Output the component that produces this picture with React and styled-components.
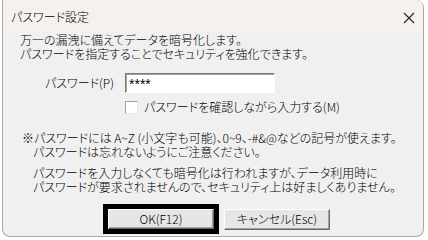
import React, { useState } from "react";
import styled, { createGlobalStyle } from "styled-components";

const GlobalStyle = createGlobalStyle`
  html, body {
    margin: 0;
    padding: 0;
    background: #ffffff;
  }
  body {
    font-family: "Noto Sans CJK JP", "Liberation Sans", sans-serif;
    font-size: 12px;
    font-weight: 300;
    color: #000;
    font-feature-settings: "palt";
  }
`;

const Desktop = styled.div`
  width: 428px;
  height: 240px;
  display: flex;
  padding: 0 4px 3px 2px;
  box-sizing: border-box;
  background: #fff;
`;

const Window = styled.div`
  flex: 1;
  display: flex;
  flex-direction: column;
  background: #f0f0f0;
  border: 1px solid #a8a8a8;
  border-top: none;
  border-radius: 0 8px 8px 8px;
  overflow: hidden;
`;

const TitleBar = styled.div`
  height: 31px;
  display: flex;
  align-items: center;
  justify-content: space-between;
  padding: 0 2px 0 8px;
  background: #f4f1ee;
  flex-shrink: 0;
`;

const Title = styled.span`
  font-size: 12px;
  line-height: 1;
  margin-top: 2px;
`;

const CloseButton = styled.button`
  width: 24px;
  height: 22px;
  display: flex;
  align-items: center;
  justify-content: center;
  border: 0;
  background: transparent;
  padding: 0;
  margin-top: 4px;
`;

const Body = styled.div`
  display: flex;
  flex-direction: column;
  padding: 2px 6px 0 17px;
`;

const Lines = styled.div`
  line-height: 14px;
  margin-top: ${p => p.$top || 0}px;
  padding-left: ${p => p.$indent || 0}px;
  white-space: nowrap;
`;

const Indented = styled.div`
  padding-left: 11px;
`;

const FieldRow = styled.div`
  display: flex;
  align-items: center;
  margin-top: 12px;
  padding-left: 25px;
`;

const FieldLabel = styled.label`
  width: 80px;
  line-height: 14px;
`;

const PasswordInput = styled.input`
  width: 150px;
  height: 20px;
  box-sizing: border-box;
  border: 1px solid;
  border-color: #7a7a7a #ffffff #ffffff #7a7a7a;
  box-shadow: inset 1px 1px 0 #a0a0a0;
  background: #fff;
  padding: 2px 3px 0;
  font-family: "Liberation Sans", sans-serif;
  font-size: 14px;
  color: #000;
  outline: none;
`;

const CheckRow = styled.label`
  display: flex;
  align-items: center;
  gap: 6px;
  margin-top: 7px;
  padding-left: 105px;
  line-height: 14px;
`;

const CheckBox = styled.span`
  width: 13px;
  height: 13px;
  box-sizing: border-box;
  background: #fff;
  border: 1px solid;
  border-color: #a0a0a0 #e8e8e8 #e8e8e8 #a0a0a0;
  flex-shrink: 0;
`;

const ButtonRow = styled.div`
  display: flex;
  align-items: center;
  gap: 5px;
  margin-top: 10px;
  padding-left: 83px;
`;

const Focus = styled.div`
  border: 5px solid #000;
  display: flex;
`;

const Button = styled.button`
  width: 106px;
  height: ${p => (p.$focused ? 20 : 21)}px;
  box-sizing: border-box;
  background: #e6e6e6;
  border: 1px solid;
  border-color: #ffffff #6a6a6a #6a6a6a #ffffff;
  box-shadow: inset -1px -1px 0 #a0a0a0;
  font-family: "Noto Sans CJK JP", "Liberation Sans", sans-serif;
  font-feature-settings: "palt";
  font-weight: 300;
  font-size: 12px;
  color: #000;
  padding: 0;
  line-height: 1;
`;

export default function App() {
  const [password] = useState("****");
  return (
    <>
      <GlobalStyle />
      <Desktop>
        <Window>
          <TitleBar>
            <Title>パスワード設定</Title>
            <CloseButton aria-label="閉じる">
              <svg width="12" height="12" viewBox="0 0 12 12">
                <path d="M1 1 L11 11 M11 1 L1 11" stroke="#222" strokeWidth="1.1" />
              </svg>
            </CloseButton>
          </TitleBar>
          <Body>
            <Lines>
              <div>万一の漏洩に備えてデータを暗号化します。</div>
              <div>パスワードを指定することでセキュリティを強化できます。</div>
            </Lines>
            <FieldRow>
              <FieldLabel>パスワード(P)</FieldLabel>
              <PasswordInput type="text" value={password} readOnly />
            </FieldRow>
            <CheckRow>
              <CheckBox />
              <span>パスワードを確認しながら入力する(M)</span>
            </CheckRow>
            <Lines $top={17} $indent={2}>
              <div>※パスワードには A~Z (小文字も可能)、0~9、-#&@などの記号が使えます。</div>
              <Indented>パスワードは忘れないようにご注意ください。</Indented>
            </Lines>
            <Lines $top={7} $indent={13}>
              <div>パスワードを入力しなくても暗号化は行われますが、データ利用時に</div>
              <div>パスワードが要求されませんので、セキュリティ上は好ましくありません。</div>
            </Lines>
            <ButtonRow>
              <Focus>
                <Button $focused>OK(F12)</Button>
              </Focus>
              <Button>キャンセル(Esc)</Button>
            </ButtonRow>
          </Body>
        </Window>
      </Desktop>
    </>
  );
}
